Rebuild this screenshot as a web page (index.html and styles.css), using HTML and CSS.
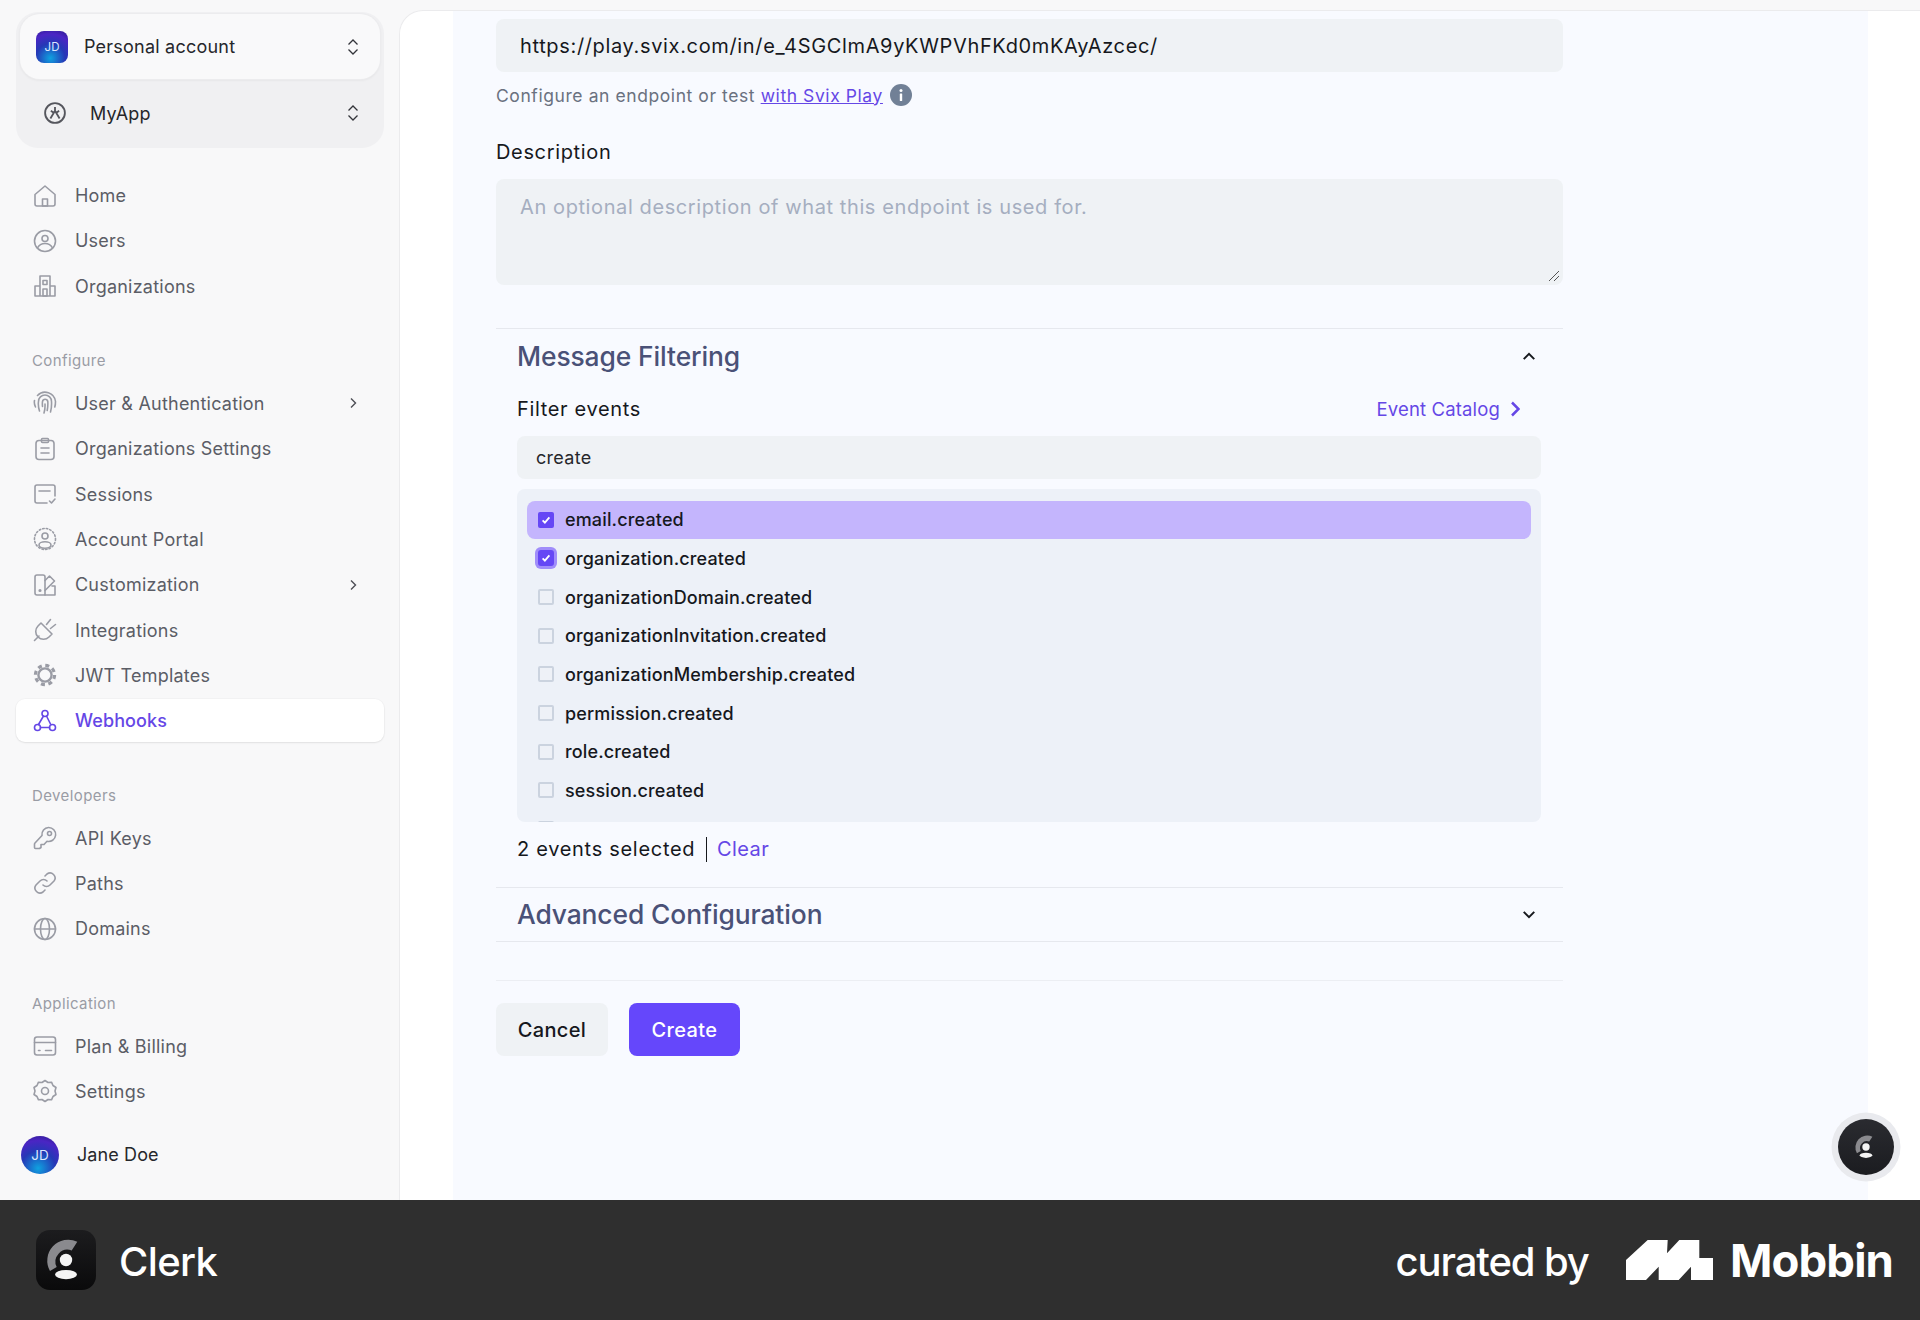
FILE: index.html
```html
<!DOCTYPE html>
<html lang="en">
<head>
<meta charset="utf-8">
<title>Clerk webhooks</title>
<link rel="stylesheet" href="styles.css">
</head>
<body>
<div class="app">
  <aside class="sidebar">
    <div class="switcher">
      <div class="switch-card">
        <span class="org-avatar">JD</span>
        <span class="switch-name">Personal account</span>
        <svg class="updown" viewBox="0 0 14 18"><path d="M2.500 6.500 7 2l4.500 4.500M2.500 11.500 7 16l4.500-4.500"/></svg>
      </div>
      <div class="switch-app">
        <svg class="app-icon" viewBox="0 0 24 24"><circle cx="12" cy="12" r="10.800"/><path d="M12 5.500V9.500M7 18 12 9.500 17 18M7.500 9.500l3 2.200M16.500 9.500l-3 2.200"/></svg>
        <span class="switch-name">MyApp</span>
        <svg class="updown" viewBox="0 0 14 18"><path d="M2.500 6.500 7 2l4.500 4.500M2.500 11.500 7 16l4.500-4.500"/></svg>
      </div>
    </div>

    <nav class="nav nav-first">
      <a class="nav-item"><svg class="ni" viewBox="0 0 24 24"><path d="M2 10.500 12 2l10 8.500V20a2 2 0 0 1-2 2H4a2 2 0 0 1-2-2z"/><rect x="9.500" y="15" width="5" height="7"/></svg>Home</a>
      <a class="nav-item"><svg class="ni" viewBox="0 0 24 24"><circle cx="12" cy="12" r="10.500"/><circle cx="12" cy="9.500" r="3"/><path d="M4.500 19c1.500-3 4-4.500 7.500-4.500s6 1.500 7.500 4.500"/></svg>Users</a>
      <a class="nav-item"><svg class="ni" viewBox="0 0 24 24"><path d="M7 22V2h10v20M2 22V12h5M22 22V12h-5M2 22h20"/><rect x="10" y="6.500" width="4" height="4"/><rect x="10" y="15" width="4" height="7"/></svg>Organizations</a>
    </nav>

    <div class="nav-label">Configure</div>
    <nav class="nav">
      <a class="nav-item"><svg class="ni" viewBox="0 0 24 24"><path d="M2.500 16c-1-2-1.500-4-1-6.500M4.500 4.500a10.500 10.500 0 0 1 18 6c0 2-.2 4-.7 5.500M6.500 20c-1-3-1.500-6-1-9.500a6.500 6.500 0 0 1 13 0c.2 3.500 0 7-1 10.500M11 22c1-3 1.200-5 1-9M9.500 15.500c-.2-2-.2-3.500 0-5a2.700 2.700 0 0 1 5.300 0c.2 3 0 6-.6 9"/></svg>User &amp; Authentication<svg class="chev" viewBox="0 0 10 12"><path d="M3 1.500 7.500 6 3 10.500"/></svg></a>
      <a class="nav-item"><svg class="ni" viewBox="0 0 24 24"><rect x="3" y="3.500" width="18" height="19" rx="3"/><rect x="8.500" y="1.500" width="7" height="4" rx="1"/><path d="M8 11h8M8 16h8"/></svg>Organizations Settings</a>
      <a class="nav-item"><svg class="ni" viewBox="0 0 24 24"><path d="M14 21H4a2 2 0 0 1-2-2V5a2 2 0 0 1 2-2h16a2 2 0 0 1 2 2v9"/><path d="M6 9h11M16.500 19l2 2 3.500-4"/></svg>Sessions</a>
      <a class="nav-item"><svg class="ni" viewBox="0 0 24 24"><circle class="dots" cx="12" cy="12" r="10.500"/><circle cx="12" cy="9" r="3"/><ellipse cx="12" cy="18" rx="6" ry="3.200"/></svg>Account Portal</a>
      <a class="nav-item"><svg class="ni" viewBox="0 0 24 24"><path d="M4 2h6a2 2 0 0 1 2 2v18H4a2 2 0 0 1-2-2V4a2 2 0 0 1 2-2z"/><path d="M12 7.500 16.500 3l5 5-9.500 9.500M19 13h3v9H12"/><circle cx="7" cy="17.500" r=".8"/></svg>Customization<svg class="chev" viewBox="0 0 10 12"><path d="M3 1.500 7.500 6 3 10.500"/></svg></a>
      <a class="nav-item"><svg class="ni" viewBox="0 0 24 24"><path d="M1.500 22.500 6 18M8 5 19 16l-3 3a7.500 7.500 0 0 1-11-11zM13.500 6.500l4-5M17.500 10.500l5-4"/></svg>Integrations</a>
      <a class="nav-item"><svg class="ni" viewBox="0 0 24 24"><circle class="cog" cx="12" cy="12" r="9.600"/><circle class="cog-in" cx="12" cy="12" r="6.600"/></svg>JWT Templates</a>
      <a class="nav-item nav-active"><svg class="ni" viewBox="0 0 24 24"><circle cx="12" cy="4.500" r="3"/><circle cx="4.500" cy="18.500" r="3"/><circle cx="19.500" cy="18.500" r="3"/><path d="M10.500 7 5.500 15.500M13.500 7l4 8M7.500 18.500h9"/></svg>Webhooks</a>
    </nav>

    <div class="nav-label">Developers</div>
    <nav class="nav">
      <a class="nav-item"><svg class="ni" viewBox="0 0 24 24"><path d="M15.500 1.500a7 7 0 1 1-1.500 13.800L11 18.500H8v3l-1.500 1H2.500A1 1 0 0 1 1.500 21.500V18a2 2 0 0 1 .5-1l7-7.500a7 7 0 0 1 6.500-8z"/><circle cx="16.500" cy="7.500" r="2"/></svg>API Keys</a>
      <a class="nav-item"><svg class="ni" viewBox="0 0 24 24"><path d="M10 14a5 5 0 0 0 7 0l4-4a5 5 0 0 0-7-7l-2 2"/><path d="M14 10a5 5 0 0 0-7 0l-4 4a5 5 0 0 0 7 7l2-2"/></svg>Paths</a>
      <a class="nav-item"><svg class="ni" viewBox="0 0 24 24"><circle cx="12" cy="12" r="10.500"/><ellipse cx="12" cy="12" rx="4.500" ry="10.500"/><path d="M1.500 12h21"/></svg>Domains</a>
    </nav>

    <div class="nav-label">Application</div>
    <nav class="nav">
      <a class="nav-item"><svg class="ni" viewBox="0 0 24 24"><rect x="1.500" y="3" width="21" height="18" rx="2.500"/><path d="M1.500 8.500h21M5.500 16.500h1.500M12.500 16.500h6"/></svg>Plan &amp; Billing</a>
      <a class="nav-item"><svg class="ni" viewBox="0 0 24 24"><path d="M12 1.500l3 2 3.500-.3 1.500 3.300 3 2-1 3.500 1 3.500-3 2-1.500 3.300-3.500-.3-3 2-3-2-3.500.3L4 17.500l-3-2 1-3.500-1-3.500 3-2 1.500-3.300 3.500.3z"/><circle cx="12" cy="12" r="3.500"/></svg>Settings</a>
    </nav>

    <div class="user">
      <span class="user-avatar">JD</span>
      <span class="user-name">Jane Doe</span>
    </div>
  </aside>

  <main class="main">
    <div class="strip">
      <form class="form">
        <div class="field-input url-input">https://play.svix.com/in/e_4SGClmA9yKWPVhFKd0mKAyAzcec/</div>
        <p class="help">Configure an endpoint or test <a class="help-link">with Svix Play</a>
          <svg class="info" viewBox="0 0 22 22"><circle cx="11" cy="11" r="11"/><rect x="9.800" y="9.500" width="2.400" height="7.500" rx=".6"/><circle cx="11" cy="6.500" r="1.500"/></svg>
        </p>
        <div class="label desc-label">Description</div>
        <div class="textarea">
          An optional description of what this endpoint is used for.
          <svg class="grip" viewBox="0 0 12 12"><path d="M1 11 11 1M6 11l5-5"/></svg>
        </div>

        <section class="acc acc-open">
          <header class="acc-head">
            <h2 class="acc-title">Message Filtering</h2>
            <svg class="acc-chev" viewBox="0 0 16 10"><path d="M2 8l6-6 6 6"/></svg>
          </header>
          <div class="acc-body">
            <div class="filter-row">
              <span class="label">Filter events</span>
              <a class="catalog">Event Catalog<svg viewBox="0 0 10 16"><path d="M2 1.500 8.500 8 2 14.500"/></svg></a>
            </div>
            <div class="search">create</div>
            <div class="list">
              <div class="row row-hl"><span class="cb cb-on"><svg viewBox="0 0 16 16"><path d="M3.500 8.500 6.500 11.500 12.500 4.500"/></svg></span>email.created</div>
              <div class="row"><span class="cb cb-on cb-focus"><svg viewBox="0 0 16 16"><path d="M3.500 8.500 6.500 11.500 12.500 4.500"/></svg></span>organization.created</div>
              <div class="row"><span class="cb"></span>organizationDomain.created</div>
              <div class="row"><span class="cb"></span>organizationInvitation.created</div>
              <div class="row"><span class="cb"></span>organizationMembership.created</div>
              <div class="row"><span class="cb"></span>permission.created</div>
              <div class="row"><span class="cb"></span>role.created</div>
              <div class="row"><span class="cb"></span>session.created</div>
              <div class="row"><span class="cb"></span>user.created</div>
            </div>
            <div class="count">2 events selected <span class="pipe"></span><a class="clear">Clear</a></div>
          </div>
        </section>

        <section class="acc acc-closed">
          <header class="acc-head acc-head-small">
            <h2 class="acc-title">Advanced Configuration</h2>
            <svg class="acc-chev" viewBox="0 0 16 10"><path d="M2 2l6 6 6-6"/></svg>
          </header>
        </section>

        <div class="actions">
          <button type="button" class="btn btn-cancel">Cancel</button>
          <button type="button" class="btn btn-create">Create</button>
        </div>
      </form>
    </div>
    <div class="widget">
      <svg viewBox="0 0 60 60"><path class="w-arc" d="M41.300 11.700A21 21 0 0 0 14 41l6.700-4A12 12 0 0 1 35.700 20.500z"/><circle class="w-dot" cx="30" cy="30" r="6.500"/><ellipse class="w-dot" cx="30" cy="44.600" rx="11" ry="4.600"/></svg>
    </div>
  </main>
</div>

<footer class="bar">
  <div class="bar-left">
    <span class="clerk-logo">
      <svg viewBox="0 0 60 60"><path class="w-arc" d="M41.300 11.700A21 21 0 0 0 14 41l6.700-4A12 12 0 0 1 35.700 20.500z"/><circle class="w-dot" cx="30" cy="30" r="6.200"/><ellipse class="w-dot" cx="30" cy="44.600" rx="11" ry="4.600"/></svg>
    </span>
    <span class="clerk-name">Clerk</span>
  </div>
  <div class="bar-right">
    <span class="curated">curated by</span>
    <svg class="mobbin-mark" viewBox="0 0 87.300 40"><path d="M0 40V20L21.700 0h20L41 13.300 53.300 0h20v18h14v22H65V26.700L52.700 40h-20V26.700L20 40z"/></svg>
    <span class="mobbin-name">Mobbin</span>
  </div>
</footer>
</body>
</html>
```
FILE: styles.css
```css
* { box-sizing: border-box; }
html, body { margin: 0; padding: 0; }
body {
  width: 1920px;
  height: 1320px;
  overflow: hidden;
  font-family: Inter, "Liberation Sans", sans-serif;
  background: #f8f8f9;
  color: #16181d;
}
.app { display: flex; height: 1200px; position: relative; }

/* sidebar */
.sidebar { width: 399px; flex: none; height: 100%; background: #f8f8f9; padding-top: 12px; }
.switcher { margin: 0 15px 0 16px; height: 136px; background: #f0f0f2; border-radius: 22px; padding: 2px 4px; }
.switch-card {
  height: 65px; display: flex; align-items: center; padding: 0 20px 0 16px;
  background: #f9f9fa; border-radius: 20px;
  box-shadow: 0 0 0 1px #ececee, 0 1px 3px rgba(0,0,0,.08);
}
.org-avatar {
  width: 32px; height: 32px; border-radius: 8px; flex: none; margin-right: 16px;
  display: flex; align-items: center; justify-content: center; color: #dbe6ff; font-size: 11.500px;
  background: radial-gradient(circle at 45% 85%, #0fa2e0 0, #2538b6 45%, #4b25c4 75%, #2a1a8c 100%);
}
.switch-name { font-size: 18px; font-weight: 400; color: #26272b; letter-spacing: .22px; flex: 1; }
.updown { width: 14px; height: 18px; flex: none; fill: none; stroke: #33343a; stroke-width: 1.300; }
.switch-app { height: 65px; display: flex; align-items: center; padding: 3px 20px 0 24px; }
.app-icon { width: 22px; height: 22px; flex: none; margin-right: 24px; fill: none; stroke: #55565d; stroke-width: 2; }

.nav { display: flex; flex-direction: column; gap: 2.330px; margin: 0 15px 0 16px; }
.nav-first { margin-top: 26px; }
.nav-item {
  height: 43px; display: flex; align-items: center; gap: 18px; padding-left: 17px;
  color: #5b5d66; font-size: 18px; font-weight: 400; letter-spacing: .22px; border-radius: 9px;
}
.ni { width: 24px; height: 24px; flex: none; fill: none; stroke: #9a9ca5; stroke-width: 1.600; stroke-linejoin: round; stroke-linecap: round; }
.dots { stroke-dasharray: 1.500 2.100; }
.cog { stroke-width: 3.200; stroke-linecap: butt; stroke-dasharray: 4 3.540; }
.cog-in { stroke-width: 2.400; }
.chev { width: 10px; height: 12px; margin-left: auto; margin-right: 26px; fill: none; stroke: #4d4e55; stroke-width: 1.400; }
.nav-active { background: #fff; color: #6547e6; font-weight: 500; letter-spacing: .1px; box-shadow: 0 1px 2px rgba(0,0,0,.08), 0 0 0 1px rgba(0,0,0,.02); }
.nav-active .ni { stroke: #6547e6; }
.nav-label { margin: 43.800px 0 10.500px 32px; height: 20px; line-height: 20px; font-size: 15px; font-weight: 400; letter-spacing: .4px; color: #9a9ca5; }
.user { display: flex; align-items: center; margin: 23px 0 0 21px; }
.user-avatar {
  width: 38px; height: 38px; border-radius: 50%; flex: none; margin-right: 18px;
  display: flex; align-items: center; justify-content: center; color: #dbe6ff; font-size: 13.500px;
  background: radial-gradient(circle at 45% 85%, #0fa2e0 0, #2538b6 45%, #4b25c4 72%, #221678 100%);
}
.user-name { font-size: 18px; font-weight: 400; letter-spacing: .1px; color: #26272b; }

/* main */
.main {
  flex: 1; height: 100%; position: relative; padding-top: 10px; background: #f8f8f9;
}
.strip {
  height: 100%; background: #fff; border-top: 1px solid #ebebed; border-left: 1px solid #ebebed;
  border-top-left-radius: 24px; padding-left: 53px; padding-right: 52px;
}
.form {
  display: block; height: 100%; background: #f8faff; padding: 8px 305px 0 43px;
}
.field-input, .search, .textarea, .btn-cancel { background: #eff2f5; }
.url-input { height: 53px; border-radius: 8px; display: flex; align-items: center; padding-left: 24px; font-size: 20px; letter-spacing: .65px; color: #16181d; }
.help { margin: 11px 0 0; height: 24px; display: flex; align-items: center; font-size: 17.500px; color: #6a7180; letter-spacing: .58px; white-space: pre-wrap; }
.help-link { color: #6547e6; text-decoration: underline; }
.info { width: 22px; height: 22px; fill: #718096; margin-left: 7px; }
.info rect, .info circle:last-child { fill: #fff; }
.label { font-size: 20px; color: #16181d; height: 24px; line-height: 24px; letter-spacing: .65px; }
.desc-label { margin-top: 33px; display: block; }
.textarea { position: relative; height: 106px; margin-top: 15px; border-radius: 8px; padding: 15px 24px; font-size: 20px; line-height: 26px; color: #a5aec0; letter-spacing: .6px; }
.grip { position: absolute; right: 3px; bottom: 3px; width: 12px; height: 12px; fill: none; stroke: #555; stroke-width: 1; }

.acc { border-top: 1px solid #e6e8ee; }
.acc-open { margin-top: 43px; }
.acc-head { height: 55px; display: flex; align-items: center; justify-content: space-between; padding: 0 27px 0 21px; }
.acc-head-small { height: 53px; }
.acc-title { margin: 0 0 1.500px; font-size: 26.400px; font-weight: 500; color: #4a5177; letter-spacing: -.1px; }
.acc-chev { width: 14px; height: 9px; flex: none; fill: none; stroke: #16181d; stroke-width: 2.300; }
.acc-body { padding: 13px 22px 26px 21px; }
.filter-row { display: flex; align-items: center; justify-content: space-between; height: 24px; padding-right: 21px; }
.catalog { display: flex; align-items: center; gap: 10px; color: #6547e6; font-size: 18.500px; letter-spacing: .15px; }
.catalog svg { width: 10px; height: 16px; fill: none; stroke: #6547e6; stroke-width: 2.500; }
.search { margin-top: 15px; height: 43px; border-radius: 8px; display: flex; align-items: center; padding-left: 19px; font-size: 18px; color: #26272b; letter-spacing: .3px; }
.list { margin-top: 10px; height: 333px; overflow: hidden; border-radius: 8px; background: #edf1f8; padding: 11.500px 10px 0; }
.row { height: 38.670px; display: flex; align-items: center; padding-left: 11px; gap: 11px; font-size: 18px; font-weight: 500; color: #16181d; letter-spacing: .15px; border-radius: 8px; }
.row-hl { background: #c4b5fd; }
.cb { width: 16px; height: 16px; flex: none; border-radius: 2px; border: 2px solid #cbd3df; background: #eef1f7; display: flex; align-items: center; justify-content: center; }
.cb-on { background: #6547f5; border-color: #6547f5; }
.cb-on svg { width: 12px; height: 12px; fill: none; stroke: #fff; stroke-width: 2.400; }
.cb-focus { box-shadow: 0 0 0 3px #a08dfa; border-radius: 3px; }
.count { margin-top: 15px; height: 24px; display: flex; align-items: center; font-size: 20px; color: #16181d; letter-spacing: .7px; white-space: pre-wrap; }
.pipe { display: inline-block; width: 1.500px; height: 25px; background: #16181d; margin: 0 10px 0 4px; }
.clear { color: #6547e6; letter-spacing: .4px; }
.acc-closed { border-bottom: 1px solid #e6e8ee; }
.actions { margin-top: 38px; padding-top: 22px; border-top: 1px solid #eceef3; display: flex; gap: 21px; }
.btn { height: 53px; border: 0; border-radius: 8px; font-family: inherit; font-size: 20px; font-weight: 500; padding: 0; letter-spacing: .35px; }
.btn-cancel { width: 112px; color: #16181d; }
.btn-create { width: 111px; background: #6547fb; color: #fff; }

.widget {
  position: absolute; right: 26px; bottom: 25px;
  width: 56px; height: 56px; border-radius: 50%;
  background: linear-gradient(#2a2b30, #1b1c20);
  box-shadow: 0 0 0 6.500px #e9eaee;
  display: flex; align-items: center; justify-content: center;
}
.widget svg { width: 34px; height: 34px; }
.w-arc { fill: #8a8a8e; }
.w-dot { fill: #f4f4f4; }

/* bottom bar */
.bar { height: 120px; background: #2f2f2f; display: flex; align-items: center; justify-content: space-between; padding: 0 27px 0 36px; }
.bar-left, .bar-right { display: flex; align-items: center; }
.clerk-logo { width: 60px; height: 60px; border-radius: 14px; background: linear-gradient(#1c1c1e, #0a0a0b); display: block; }
.clerk-logo svg { width: 60px; height: 60px; display: block; }
.clerk-name { margin-left: 23px; padding-top: 2px; font-size: 40px; font-weight: 500; color: #fff; letter-spacing: -.6px; }
.curated { padding-top: 2px; font-size: 40px; font-weight: 500; color: #fff; letter-spacing: -1.100px; }
.mobbin-mark { width: 87.300px; height: 40px; margin-left: 37px; fill: #fff; }
.mobbin-name { margin-left: 17px; font-size: 45.500px; font-weight: 700; color: #fff; letter-spacing: -.9px; }
```
